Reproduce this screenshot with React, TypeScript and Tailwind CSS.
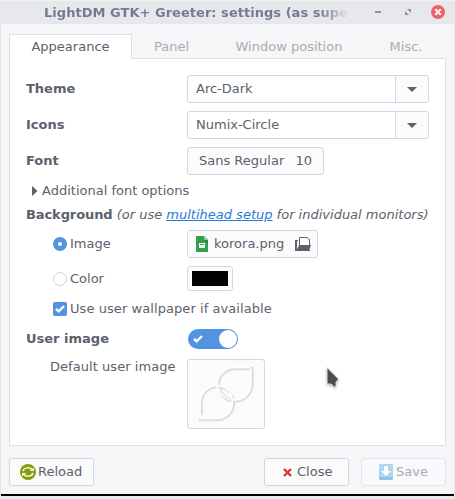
import type { ReactNode } from "react";

function Label({ children }: { children: ReactNode }) {
  return <div className="w-[161px] shrink-0 font-bold">{children}</div>;
}

function Combo({ value }: { value: string }) {
  return (
    <div className="flex h-7 w-[242px] overflow-hidden rounded-[3px] border border-[#cfd6e6] bg-white">
      <div className="flex flex-1 items-center pl-2">{value}</div>
      <div className="flex w-[33px] items-center justify-center border-l border-[#cfd6e6] bg-[#fbfbfc]">
        <svg width="10" height="5" viewBox="0 0 10 5"><path d="M0 0h10L5 5z" fill="#5c616c" /></svg>
      </div>
    </div>
  );
}

function Check() {
  return (
    <svg width="10" height="8" viewBox="0 0 10 8" fill="none">
      <path d="M1 3.800l2.600 2.500L9 1" stroke="#fff" strokeWidth="2.300" />
    </svg>
  );
}

const button = "flex h-7 items-center rounded-[3px] border border-[#cfd6e6] bg-[#fbfbfc]";

export default function App() {
  return (
    <div className="flex h-[499px] w-[455px] flex-col overflow-hidden bg-[#e7e8eb] font-['DejaVu_Sans',sans-serif] text-[13px] leading-4 whitespace-nowrap text-[#5c616c]">
      <header className="flex h-6 shrink-0 items-center border-t border-[#f0f1f3] pl-11">
        <div className="w-[306px] bg-gradient-to-r from-[#727a8f] from-90% to-[#e7e8eb] bg-clip-text font-bold tracking-[0.03px] text-transparent">
          LightDM GTK+ Greeter: settings (as supe
        </div>
        <svg width="76" height="16" viewBox="0 0 76 16" className="-mt-px ml-6">
          <path d="M1 7h6v2H1z" fill="#8f939d" />
          <path d="M33 5h4v4zM31 7v4h4z" fill="#8f939d" />
          <circle cx="64" cy="8" r="7" fill="#f46067" />
          <path d="M61.3 5.3l5.4 5.4m0-5.4l-5.4 5.4" stroke="#fff" strokeWidth="2" />
        </svg>
      </header>

      <main className="mx-px flex h-[470px] shrink-0 flex-col bg-[#f5f6f7] px-2 pt-[10px]">
        <nav className="flex h-[25px] shrink-0 text-[#a9acb2]">
          <div className="relative z-10 -mb-px flex h-[25px] w-[123px] items-center justify-center border border-b-0 border-[#dcdfe3] bg-white pb-px text-[#5c616c]">Appearance</div>
          <div className="flex flex-1 border-b border-[#dcdfe3]">
            <div className="flex w-[79px] items-center justify-center pt-px">Panel</div>
            <div className="flex w-[156px] items-center justify-center pt-px">Window position</div>
            <div className="flex w-[78px] items-center justify-center pt-px">Misc.</div>
          </div>
        </nav>

        <section className="flex h-[387px] shrink-0 flex-col border border-t-0 border-[#dcdfe3] bg-white pt-4 pl-4">
          <div className="flex h-7 items-center"><Label>Theme</Label><Combo value="Arc-Dark" /></div>
          <div className="mt-2 flex h-7 items-center"><Label>Icons</Label><Combo value="Numix-Circle" /></div>
          <div className="mt-2 flex h-7 items-center">
            <Label>Font</Label>
            <div className={`${button} w-[137px] justify-between pr-[11px] pl-[11px]`}><span>Sans Regular</span><span>10</span></div>
          </div>
          <div className="mt-2 flex h-4 items-center pl-1.5">
            <svg width="6" height="10" viewBox="0 0 6 10"><path d="M0 0v10L5.5 5z" fill="#5c616c" /></svg>
            <span className="ml-1">Additional font options</span>
          </div>
          <div className="mt-2 h-4">
            <b className="tracking-[-0.1px]">Background</b> <i>(or use <span className="text-[#2679db] underline">multihead setup</span> for individual monitors)</i>
          </div>
          <div className="mt-[7px] flex h-7 items-center pl-[27px]">
            <div className="flex size-[14px] items-center justify-center rounded-full bg-[#5294e2]"><div className="size-1 rounded-full bg-white" /></div>
            <div className="ml-[3px] w-[117px]">Image</div>
            <div className={`${button} w-[131px] pl-2`}>
              <svg width="12" height="16" viewBox="0 0 12 16">
                <path d="M0 0h8l4 4v12H0z" fill="#34a04c" /><path d="M8 0l4 4H8z" fill="#8bcc98" /><path d="M8 4h4v4z" fill="#2b8740" />
                <path d="M3 7V5h2l1 1h3v6H3z" fill="#34a04c" /><path d="M3 7h6v5H3z" fill="#fff" /><path d="M4 8h4v1H4z" fill="#34a04c" />
              </svg>
              <span className="ml-1.5 w-[70px]">korora.png</span>
              <svg width="16" height="14" viewBox="0 0 16 14" className="ml-[11px]">
                <path d="M0 3h3v1H2v9h13v1H0z" fill="#5c616c" />
                <path d="M4.5 9V.5h8L14.5 3v6" fill="#fff" stroke="#5c616c" />
                <path d="M4 8h12l-2 6H1.5z" fill="#5c616c" />
              </svg>
            </div>
          </div>
          <div className="mt-2 flex h-[25px] items-center pl-[27px]">
            <div className="size-[14px] rounded-full border border-[#cfd6e6] bg-white" />
            <div className="ml-[3px] w-[117px]">Color</div>
            <div className="flex h-[25px] w-[46px] items-center justify-center rounded-[3px] border border-[#cfd6e6] bg-[#fbfbfc]"><div className="h-[15px] w-9 bg-black" /></div>
          </div>
          <div className="mt-[10px] flex h-4 items-center pl-[27px]">
            <div className="flex size-[14px] items-center justify-center rounded-[2px] bg-[#5294e2]"><Check /></div>
            <span className="ml-[3px] tracking-[0.07px]">Use user wallpaper if available</span>
          </div>
          <div className="mt-3 flex h-5 items-center">
            <Label>User image</Label>
            <div className="ml-px flex h-5 w-[50px] items-center justify-between rounded-full bg-[#5294e2] pr-px pl-[5px]"><Check /><div className="size-[18px] rounded-full bg-white" /></div>
          </div>
          <div className="mt-[10px] flex h-[70px]">
            <div className="w-[161px] shrink-0 pl-6 tracking-[0.05px]">Default user image</div>
            <div className="flex h-[70px] w-[78px] items-center justify-center rounded-[3px] border border-[#cfd6e6] bg-[#fbfbfc]">
              <svg width="76" height="68" viewBox="188 360 76 68" fill="none">
                <g stroke="#dddddd" strokeWidth="2.5">
                  <path d="M250 369H235A16.5 16.5 0 0 0 218.5 385A16.500 16.500 0 0 0 235 401.500A17.500 17.500 0 0 0 252.500 384V367" />
                  <path d="M201.500 415V403A16 16 0 0 1 217.500 387A16.500 16.500 0 0 1 234 403A17 17 0 0 1 217 420H199" />
                </g>
                <g stroke="#fff" strokeWidth="1.7">
                  <path d="M250 367.300H235A17.500 17.500 0 0 0 217 385A17.500 17.500 0 0 0 235 399.800A15.800 15.800 0 0 0 250.800 384V368" />
                  <path d="M200 415V403A17.500 17.500 0 0 1 217.500 385.500A15.500 15.500 0 0 1 232.300 403A15.300 15.300 0 0 1 217 418.300H200" />
                </g>
                <path d="M220.500 387c1 5 5.500 11 11 12.500" stroke="#dedede" strokeWidth="1.200" />
              </svg>
            </div>
            <svg width="14" height="22" viewBox="0 0 14 22" className="mt-2 ml-[61px] overflow-visible drop-shadow-[0_1px_1px_rgba(0,0,0,0.35)]">
              <path d="M1 .5v16.500h4l3.500 3 1.500-.5v-4l2.500-3.500z" fill="#4b4b4b" stroke="#fff" strokeWidth=".8" />
            </svg>
          </div>
        </section>

        <footer className="mt-3 flex h-7 shrink-0">
          <div className={`${button} w-[85px] pl-[10px]`}>
            <svg width="16" height="16" viewBox="0 0 16 16">
              <circle cx="8" cy="8" r="8" fill="#859f0a" />
              <path d="M3 7C4 3.500 10 2.500 12.500 6M13 9C12 12.500 6 13.500 3.500 10" fill="none" stroke="#f6f8e9" strokeWidth="1.500" />
              <path d="M9.500 7H14V3.500zM6.500 9H2v3.500z" fill="#f6f8e9" />
            </svg>
            <span className="ml-0.5">Reload</span>
          </div>
          <div className={`${button} ml-auto w-[85px] pl-[18px]`}>
            <svg width="9" height="9" viewBox="0 0 9 9"><path d="M1 1l7 7m0-7L1 8" stroke="#dc3434" strokeWidth="2.400" /></svg>
            <span className="ml-[5px]">Close</span>
          </div>
          <div className="ml-3 flex h-7 w-[85px] items-center rounded-[3px] border border-[#e1e5ed] bg-[#f8f9fa] pl-[17px] text-[#a9acb2]">
            <svg width="14" height="16" viewBox="0 0 14 16">
              <rect width="14" height="16" rx="1.500" fill="#8fc3e6" /><rect width="14" height="13" rx="1.500" fill="#b1d6ef" />
              <path d="M5 2h4v5h3l-5 5-5-5h3z" fill="#fff" />
            </svg>
            <span className="ml-[3px]">Save</span>
          </div>
        </footer>
      </main>
      <div className="mx-px h-0.5 shrink-0 bg-black" />
    </div>
  );
}
